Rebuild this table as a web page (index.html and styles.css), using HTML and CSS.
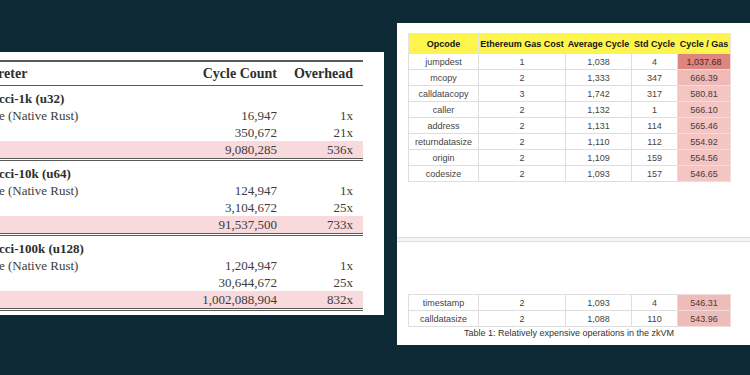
FILE: index.html
```html
<!DOCTYPE html>
<html>
<head>
<meta charset="utf-8">
<link rel="stylesheet" href="styles.css">
</head>
<body>
<div class="stage">
  <section class="paper left">
    <div class="ltable">
      <div class="lrow head">
        <div class="lab">Interpreter</div>
        <div class="num">Cycle Count</div>
        <div class="num">Overhead</div>
      </div>
      <div class="group">
        <div class="lrow"><div class="lab b">Fibonacci-1k (u32)</div><div></div><div></div></div>
        <div class="lrow"><div class="lab">Baseline (Native Rust)</div><div class="num">16,947</div><div class="num">1x</div></div>
        <div class="lrow"><div class="lab">SP1</div><div class="num">350,672</div><div class="num">21x</div></div>
        <div class="lrow hl"><div class="lab">EVM</div><div class="num">9,080,285</div><div class="num">536x</div></div>
      </div>
      <div class="group">
        <div class="lrow"><div class="lab b">Fibonacci-10k (u64)</div><div></div><div></div></div>
        <div class="lrow"><div class="lab">Baseline (Native Rust)</div><div class="num">124,947</div><div class="num">1x</div></div>
        <div class="lrow"><div class="lab">SP1</div><div class="num">3,104,672</div><div class="num">25x</div></div>
        <div class="lrow hl"><div class="lab">EVM</div><div class="num">91,537,500</div><div class="num">733x</div></div>
      </div>
      <div class="group">
        <div class="lrow"><div class="lab b">Fibonacci-100k (u128)</div><div></div><div></div></div>
        <div class="lrow"><div class="lab">Baseline (Native Rust)</div><div class="num">1,204,947</div><div class="num">1x</div></div>
        <div class="lrow"><div class="lab">SP1</div><div class="num">30,644,672</div><div class="num">25x</div></div>
        <div class="lrow hl"><div class="lab">EVM</div><div class="num">1,002,088,904</div><div class="num">832x</div></div>
      </div>
    </div>
  </section>

  <section class="paper right">
    <div class="page top">
      <table class="gas">
        <colgroup><col class="c1"><col class="c2"><col class="c3"><col class="c4"><col class="c5"></colgroup>
        <thead>
          <tr><th>Opcode</th><th>Ethereum Gas Cost</th><th>Average Cycle</th><th>Std Cycle</th><th>Cycle / Gas</th></tr>
        </thead>
        <tbody>
          <tr><td>jumpdest</td><td>1</td><td>1,038</td><td>4</td><td class="r hot">1,037.68</td></tr>
          <tr><td>mcopy</td><td>2</td><td>1,333</td><td>347</td><td class="r warm">666.39</td></tr>
          <tr><td>calldatacopy</td><td>3</td><td>1,742</td><td>317</td><td class="r">580.81</td></tr>
          <tr><td>caller</td><td>2</td><td>1,132</td><td>1</td><td class="r">566.10</td></tr>
          <tr><td>address</td><td>2</td><td>1,131</td><td>114</td><td class="r">565.46</td></tr>
          <tr><td>returndatasize</td><td>2</td><td>1,110</td><td>112</td><td class="r">554.92</td></tr>
          <tr><td>origin</td><td>2</td><td>1,109</td><td>159</td><td class="r">554.56</td></tr>
          <tr><td>codesize</td><td>2</td><td>1,093</td><td>157</td><td class="r">546.65</td></tr>
        </tbody>
      </table>
    </div>
    <div class="pagebreak"></div>
    <div class="page bottom">
      <table class="gas">
        <colgroup><col class="c1"><col class="c2"><col class="c3"><col class="c4"><col class="c5"></colgroup>
        <tbody>
          <tr><td>timestamp</td><td>2</td><td>1,093</td><td>4</td><td class="r low">546.31</td></tr>
          <tr><td>calldatasize</td><td>2</td><td>1,088</td><td>110</td><td class="r low">543.96</td></tr>
        </tbody>
      </table>
      <p class="caption">Table 1: Relatively expensive operations in the zkVM</p>
    </div>
  </section>
</div>
</body>
</html>
```

FILE: styles.css
```css
html, body {
  margin: 0;
  padding: 0;
}
body {
  width: 750px;
  height: 375px;
  overflow: hidden;
  background: #0f2a37;
}
.stage {
  display: flex;
  align-items: flex-start;
  width: 750px;
  height: 375px;
}
.paper {
  background: #ffffff;
  flex: none;
}

/* ---------- left paper (serif table) ---------- */
.left {
  margin-top: 52px;
  margin-left: -60px;
  width: 444px;
  height: 263px;
  box-sizing: border-box;
  padding: 8px 21px 0 20px;
  font-family: "Liberation Serif", "DejaVu Serif", serif;
  font-size: 13px;
  color: #3c3c3c;
}
.ltable {
  border-top: 2px solid #5a5a5a;
}
.lrow {
  display: grid;
  grid-template-columns: 1fr 90px 86px;
  height: 17px;
  align-items: center;
  white-space: nowrap;
}
.lrow .num {
  text-align: right;
  padding-right: 10px;
}
.lrow .num:nth-child(2) {
  padding-right: 0;
}
.lrow.head {
  height: 23px;
  font-size: 14px;
  font-weight: bold;
  color: #2e2e2e;
  border-bottom: 1px solid #5a5a5a;
}
.lab.b {
  font-weight: bold;
  color: #2e2e2e;
}
.group {
  padding-top: 4px;
  border-bottom: 3px double #5a5a5a;
}
.lrow.hl {
  background: #f8d9dc;
}

/* ---------- right paper (sans table) ---------- */
.right {
  margin-left: 13px;
  margin-top: 23px;
  width: 353px;
  height: 322px;
  display: flex;
  flex-direction: column;
  font-family: "Liberation Sans", Arial, sans-serif;
}
.page {
  box-sizing: border-box;
  padding-left: 11px;
}
.page.top {
  height: 214px;
  padding-top: 10px;
}
.pagebreak {
  height: 3px;
  border-top: 1px solid #dcdcdc;
  border-bottom: 1px solid #dcdcdc;
  background: #f4f4f4;
  flex: none;
}
.page.bottom {
  flex: 1;
  display: flex;
  flex-direction: column;
  justify-content: flex-end;
  padding-bottom: 7px;
}
.gas {
  border-collapse: collapse;
  table-layout: fixed;
  width: 322px;
  font-size: 9px;
  color: #444;
}
.gas col.c1 { width: 70px; }
.gas col.c2 { width: 87px; }
.gas col.c3 { width: 66px; }
.gas col.c4 { width: 46px; }
.gas col.c5 { width: 53px; }
.gas th {
  height: 19px;
  background: #fdf54c;
  color: #151515;
  font-weight: bold;
  font-size: 9px;
  padding: 0;
  text-align: center;
  white-space: nowrap;
  border: 1px solid #e4e4e4;
}
.gas td {
  height: 15px;
  padding: 0;
  text-align: center;
  border: 1px solid #dedede;
  white-space: nowrap;
}
.gas td.r {
  background: #f3c6c3;
  color: #4a3a3a;
  border-color: #f0dcda;
}
.gas td.r.warm { background: #efb9b5; }
.gas td.r.hot { background: #df8580; color: #402a2a; }
.gas td.r.low { background: #efbdb9; }
.caption {
  margin: 1px 0 0 0;
  width: 322px;
  text-align: center;
  font-size: 9px;
  color: #333;
}
```
